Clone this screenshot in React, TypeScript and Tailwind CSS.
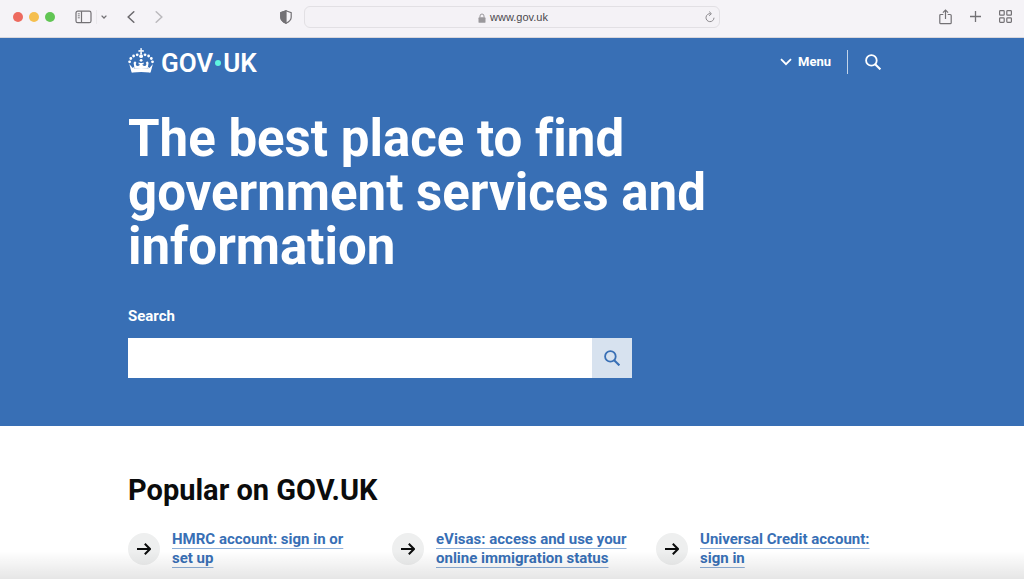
import { useState } from "react"

interface PopularLink {
  label: string
  href: string
}

const POPULAR_LINKS: PopularLink[] = [
  { label: "HMRC account: sign in or set up", href: "#hmrc-account" },
  { label: "eVisas: access and use your online immigration status", href: "#evisas" },
  { label: "Universal Credit account: sign in", href: "#universal-credit" },
]

function SearchIcon() {
  return (
    <svg viewBox="0 0 16 16" fill="none" stroke="currentColor" className="size-4" aria-hidden="true">
      <circle cx="6.4" cy="6.4" r="5.3" strokeWidth="1.8" />
      <path d="M10.2 10.2 15.4 15.4" strokeWidth="2.1" />
    </svg>
  )
}

function Crown() {
  return (
    <svg viewBox="0 0 26 25" className="h-[25px] w-[26px] shrink-0" fill="currentColor" aria-hidden="true">
      <path d="M12.200.3h1.800l-.3 2 2-.3v1.900l-2-.3.400 2.600h-2l.4-2.600-2 .3V2l2 .3z" />
      <circle cx="13.1" cy="8.2" r="1.9" />
      <circle cx="13.1" cy="12.3" r="1.4" />
      <circle cx="9.2" cy="6.8" r="1.4" />
      <circle cx="5.6" cy="8" r="1.4" />
      <circle cx="2.8" cy="10.5" r="1.4" />
      <circle cx="1.6" cy="13.8" r="1.4" />
      <circle cx="17" cy="6.800" r="1.4" />
      <circle cx="20.6" cy="8" r="1.4" />
      <circle cx="23.3" cy="10.5" r="1.4" />
      <circle cx="24.5" cy="13.8" r="1.4" />
      <path d="M3.700 20.800q9.400-1.500 18.800 0l-.9 3.700q-8.500-1.100-17 0z" />
      <path d="M1.300 16l2.300 8.400h1.500l1.200-5.600-1.600 1.300z" />
      <path d="M24.900 16l-2.300 8.400h-1.500l-1.200-5.600 1.600 1.300z" />
      <path d="M7 13.300l1.400 1.500-.7 1.100q.4 2.200 2.200 2.200 1.700-.2 2-1.900h-1.300v-1.700l1.500.5h2l1.500-.5v1.700h-1.300q.3 1.700 2 1.900 1.800 0 2.200-2.200l-.7-1.100 1.400-1.500 1.400 1.500-.9 5.700q-6.600-.9-13.200 0l-.9-5.700z" />
    </svg>
  )
}

function BrowserBar() {
  return (
    <div className="grid h-[38px] grid-cols-[304px_1fr_304px] items-center border-b border-[#d9d7dc] bg-[#f5f3f7] pb-1 font-['Liberation_Sans',sans-serif] text-[#737175]">
      <div className="flex items-center pl-[13px]">
        <div className="flex gap-[6px]">
          <span className="size-[10px] rounded-full bg-[#ed6a5f]" />
          <span className="size-[10px] rounded-full bg-[#f5bf4f]" />
          <span className="size-[10px] rounded-full bg-[#61c554]" />
        </div>
        <button aria-label="Sidebar" className="ml-5">
          <svg viewBox="0 0 17 14" fill="none" stroke="currentColor" className="h-[14px] w-[17px]" strokeWidth="1.2">
            <rect x="1" y="1.2" width="15" height="11.5" rx="1.8" />
            <path d="M6.5 1.2v11.5" />
            <path d="M2.8 3.8h2M2.8 5.8h2M2.8 7.8h2" strokeWidth=".9" />
          </svg>
        </button>
        <button aria-label="Tab groups" className="ml-1 border-l border-[#eae8ec] py-1 pl-1">
          <svg viewBox="0 0 6 6" fill="none" stroke="currentColor" className="size-[6px]" strokeWidth="1.3">
            <path d="M.6 1.6 3 4l2.4-2.4" />
          </svg>
        </button>
        <button aria-label="Back" className="ml-5">
          <svg viewBox="0 0 8 12" fill="none" stroke="#6b696d" className="h-3 w-2" strokeWidth="1.5" strokeLinecap="round">
            <path d="M6.8.8 1.2 6l5.6 5.2" />
          </svg>
        </button>
        <button aria-label="Forward" className="ml-5">
          <svg viewBox="0 0 8 12" fill="none" stroke="#bbb9bd" className="h-3 w-2" strokeWidth="1.5" strokeLinecap="round">
            <path d="M1.2.8 6.8 6l-5.6 5.2" />
          </svg>
        </button>
        <button aria-label="Privacy report" className="mr-3 ml-auto">
          <svg viewBox="0 0 12 14" className="h-[14px] w-3" fill="none" stroke="currentColor" strokeWidth="1.2">
            <path d="M6 .8 11.2 2.6v4.6c0 3-2.4 4.7-5.2 6C3.2 11.9.8 10.2.8 7.2V2.6z" />
            <path d="M6 .8v12.4C3.2 11.9.8 10.2.8 7.2V2.6z" fill="currentColor" />
          </svg>
        </button>
      </div>

      <div className="flex h-[22px] items-center rounded-md border border-[#e2e0e4] bg-[#f4f2f6] pr-1">
        <div className="flex flex-1 items-center justify-center gap-1 pt-[2px] pl-4 text-[11px] text-[#4b494d]">
          <svg viewBox="0 0 8 10" className="h-[10px] w-2" fill="#9a989c" aria-hidden="true">
            <rect x=".5" y="4.3" width="7" height="5.5" rx=".9" />
            <path d="M2 4.5V3a2 2 0 0 1 4 0v1.5" fill="none" stroke="#9a989c" strokeWidth="1" />
          </svg>
          www.gov.uk
        </div>
        <button aria-label="Reload">
          <svg viewBox="0 0 10 12" className="h-3 w-[10px]" fill="none" stroke="#8b898d" strokeWidth="1">
            <path d="M5.6 2.7A4 4 0 1 0 9 6.7" />
            <path d="M4.2.6 6.4 2.7 4.2 4.8" />
          </svg>
        </button>
      </div>

      <div className="flex items-center justify-end gap-[18px] pr-3">
        <button aria-label="Share">
          <svg viewBox="0 0 13 16" className="h-4 w-[13px]" fill="none" stroke="currentColor" strokeWidth="1.2">
            <path d="M4.3 5.5H1.8q-1 0-1 1v7.2q0 1 1 1h9.4q1 0 1-1V6.5q0-1-1-1H8.7" />
            <path d="M6.5 10V1.2M3.9 3.6 6.5 1l2.6 2.6" />
          </svg>
        </button>
        <button aria-label="New tab">
          <svg viewBox="0 0 11 11" className="size-[11px]" fill="none" stroke="currentColor" strokeWidth="1.3">
            <path d="M5.5 0v11M0 5.5h11" />
          </svg>
        </button>
        <button aria-label="Tab overview">
          <svg viewBox="0 0 13 13" className="size-[13px]" fill="none" stroke="currentColor" strokeWidth="1.2">
            <rect x=".6" y=".6" width="4.6" height="4.6" rx=".8" />
            <rect x="7.8" y=".6" width="4.6" height="4.6" rx=".8" />
            <rect x=".6" y="7.8" width="4.6" height="4.6" rx=".8" />
            <rect x="7.8" y="7.8" width="4.6" height="4.6" rx=".8" />
          </svg>
        </button>
      </div>
    </div>
  )
}

export default function App() {
  const [query, setQuery] = useState("")

  return (
    <div className="relative min-h-screen overflow-hidden bg-white font-['Roboto',sans-serif] text-[#0b0c0c] [font-variant-ligatures:none]">
      <BrowserBar />

      <div className="bg-[#386fb5] pb-12 text-white">
        <header className="mx-auto flex h-12 w-3/4 items-center justify-between">
          <a href="#home" aria-label="GOV.UK" className="flex items-center gap-[7px] pb-1">
            <Crown />
            <span className="flex items-center pt-[6px] text-[26px] leading-6 font-semibold">
              GOV
              <span className="mx-[2px] size-[6px] rounded-full bg-[#5ff5e0]" />
              UK
            </span>
          </a>
          <nav className="flex items-center">
            <button className="flex items-center gap-[6px] pr-4 text-[13px] leading-6 font-bold">
              <svg viewBox="0 0 12 8" className="h-2 w-3" fill="none" stroke="currentColor" strokeWidth="1.8">
                <path d="M1 1.2 6 6.2l5-5" />
              </svg>
              Menu
            </button>
            <button aria-label="Search GOV.UK" className="flex h-6 items-center border-l border-white/70 pr-[15px] pl-[17px]">
              <SearchIcon />
            </button>
          </nav>
        </header>

        <div className="mx-auto w-3/4 pt-[26px]">
          <h1 className="max-w-[620px] text-[51px] leading-[54px] font-bold">
            The best place to find government services and information
          </h1>
          <form className="mt-[30px] grid grid-cols-3 gap-x-6" onSubmit={(e) => e.preventDefault()}>
            <label htmlFor="search" className="col-span-3 text-[15px] leading-6 font-bold">
              Search
            </label>
            <div className="col-span-2 mt-[10px] flex h-10">
              <input
                id="search"
                type="search"
                value={query}
                onChange={(e) => setQuery(e.target.value)}
                className="min-w-0 flex-1 bg-white px-2 text-[#0b0c0c] outline-none"
              />
              <button aria-label="Search" className="flex w-10 items-center justify-center bg-[#d7e2ef] text-[#386fb5]">
                <SearchIcon />
              </button>
            </div>
          </form>
        </div>
      </div>

      <main className="mx-auto w-3/4 pt-12">
        <h2 className="text-[29px] leading-8 font-bold">Popular on GOV.UK</h2>
        <ul className="mt-6 grid grid-cols-3 gap-6">
          {POPULAR_LINKS.map((link) => (
            <li key={link.href} className="flex items-start gap-3 pr-1">
              <span className="mt-[3px] flex size-8 shrink-0 items-center justify-center rounded-full bg-[#eeefef]">
                <svg viewBox="0 0 14 12" className="h-3 w-[14px]" fill="none" stroke="#0b0c0c" strokeWidth="2">
                  <path d="M0 6h13M7.8.8 13 6l-5.2 5.2" />
                </svg>
              </span>
              <a
                href={link.href}
                className="text-[15px] leading-[19px] font-bold text-[#386fb5] underline decoration-[#8fb0d8] decoration-1 underline-offset-4"
              >
                {link.label}
              </a>
            </li>
          ))}
        </ul>
      </main>

      {/* fade at the bottom edge of the window */}
      <div className="pointer-events-none absolute inset-x-0 bottom-0 h-7 bg-linear-to-b from-black/0 to-black/10" />
    </div>
  )
}
